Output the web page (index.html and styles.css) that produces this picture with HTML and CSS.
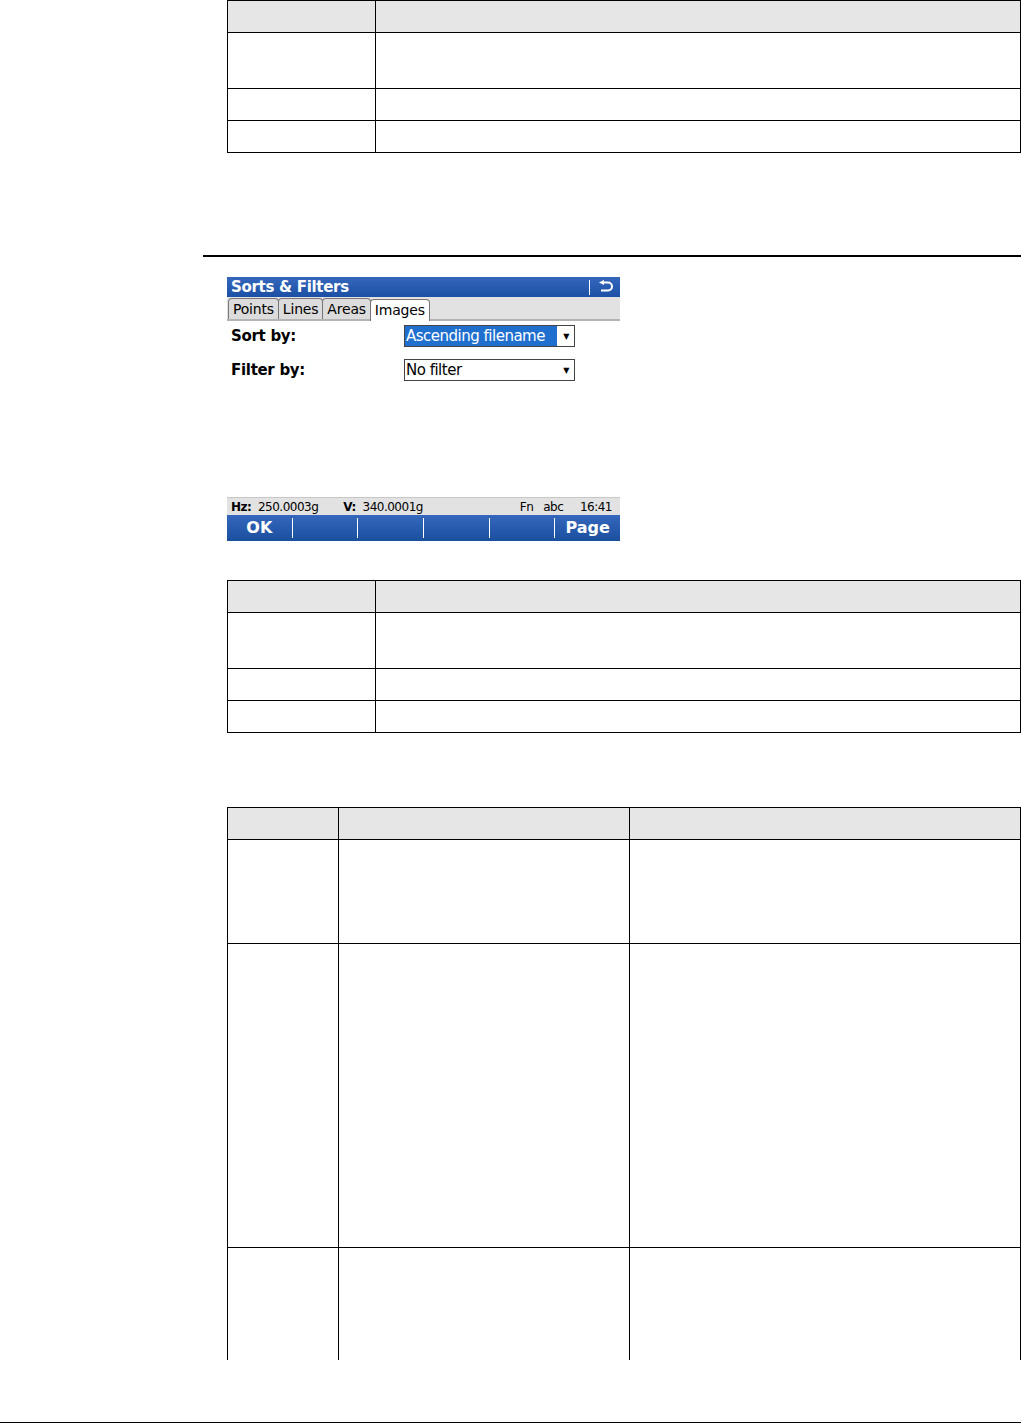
FILE: index.html
```html
<!DOCTYPE html>
<html lang="en">
<head>
    <meta charset="UTF-8">
    <title>Sorts &amp; Filters</title>
    <link rel="stylesheet" href="styles.css">
</head>
<body>
    <div class="page">

        <table class="grid two-col first">
            <tr class="head"><td></td><td></td></tr>
            <tr class="tall"><td></td><td></td></tr>
            <tr><td></td><td></td></tr>
            <tr><td></td><td></td></tr>
        </table>

        <div class="rule"></div>

        <div class="screen">
            <div class="title-bar">
                <span class="title-text">Sorts &amp; Filters</span>
                <span class="title-tools">
                    <span class="sep"></span>
                    <svg class="back-icon" width="16" height="14" viewBox="0 0 16 14">
                        <path d="M5 2.5 H10 A4 4 0 0 1 10 10.5 H3" fill="none" stroke="white" stroke-width="2"/>
                        <path d="M1 2.5 L6 0 L6 5 Z" fill="white"/>
                    </svg>
                </span>
            </div>
            <div class="tabs">
                <span class="tab">Points</span>
                <span class="tab">Lines</span>
                <span class="tab">Areas</span>
                <span class="tab active">Images</span>
            </div>
            <div class="field">
                <span class="label">Sort by:</span>
                <span class="select"><span class="value selected">Ascending filename</span><span class="arrow">&#9660;</span></span>
            </div>
            <div class="field">
                <span class="label">Filter by:</span>
                <span class="select"><span class="value">No filter</span><span class="arrow">&#9660;</span></span>
            </div>
        </div>

        <div class="screen-foot">
            <div class="status">
                <span><b>Hz:</b>&nbsp; 250.0003g</span>
                <span class="v"><b>V:</b>&nbsp; 340.0001g</span>
                <span class="right">Fn&nbsp;&nbsp; abc&nbsp;&nbsp;&nbsp;&nbsp; 16:41</span>
            </div>
            <div class="softkeys">
                <span class="key">OK</span>
                <span class="key"></span>
                <span class="key"></span>
                <span class="key"></span>
                <span class="key"></span>
                <span class="key">Page</span>
            </div>
        </div>

        <table class="grid two-col second">
            <tr class="head"><td></td><td></td></tr>
            <tr class="tall"><td></td><td></td></tr>
            <tr><td></td><td></td></tr>
            <tr><td></td><td></td></tr>
        </table>

        <table class="grid three-col">
            <tr class="head"><td></td><td></td><td></td></tr>
            <tr class="r1"><td></td><td></td><td></td></tr>
            <tr class="r2"><td></td><td></td><td></td></tr>
            <tr class="r3"><td></td><td></td><td></td></tr>
        </table>
    </div>

    <div class="footer-line"></div>
</body>
</html>
```

FILE: styles.css
```css
body {
    margin: 0;
    background: white;
    font-family: "DejaVu Sans", Verdana, sans-serif;
}

.page {
    height: 1422px;
    padding-left: 227px;
    box-sizing: border-box;
    overflow: hidden;
}

/* tables */
.grid {
    border-collapse: collapse;
    width: 794px;
    table-layout: fixed;
}

.grid td {
    border: 1.5px solid black;
    height: 31px;
    padding: 0;
}

.grid .head td {
    background: #e6e6e6;
}

.grid .tall td {
    height: 55px;
}

.two-col td:first-child {
    width: 147px;
}

.second {
    margin-top: 39px;
}

.three-col {
    margin-top: 74px;
}

.three-col td:nth-child(1) { width: 110px; }
.three-col td:nth-child(2) { width: 290px; }
.three-col .r1 td { height: 103px; }
.three-col .r2 td { height: 303px; }
.three-col .r3 td {
    height: 112px;
    border-bottom: none;
}

.rule {
    height: 2px;
    background: black;
    margin: 102px 0 0 -24px;
    width: 818px;
}

/* device screen */
.screen {
    width: 393px;
    margin-top: 20px;
    height: 108px;
}

.title-bar {
    height: 20px;
    background: linear-gradient(to bottom, #3568bd, #1c50a4);
    color: white;
    display: flex;
    align-items: center;
    justify-content: space-between;
    padding: 0 6px 0 4px;
}

.title-text {
    font-weight: bold;
    font-size: 15px;
    letter-spacing: -0.3px;
}

.title-tools {
    display: flex;
    align-items: center;
    gap: 8px;
}

.sep {
    width: 1px;
    height: 15px;
    background: white;
}

.tabs {
    height: 22px;
    background: #e2e2e2;
    border-bottom: 2px solid #b4b4b4;
    display: flex;
    align-items: flex-end;
    padding-left: 1px;
}

.tab {
    font-size: 14px;
    letter-spacing: -0.2px;
    height: 20px;
    line-height: 21px;
    padding: 0 4px;
    border: 1px solid #777;
    border-bottom: none;
    border-radius: 4px 4px 0 0;
    background: #dcdcdc;
    margin-right: -1px;
}

.tab.active {
    background: white;
    height: 21px;
    margin-bottom: -2px;
    position: relative;
}

.field {
    display: flex;
    align-items: center;
    height: 22px;
    margin-top: 4px;
    padding-left: 4px;
}

.field + .field {
    margin-top: 12px;
}

.label {
    width: 173px;
    font-weight: bold;
    font-size: 15px;
    letter-spacing: -0.3px;
}

.select {
    width: 169px;
    height: 20px;
    border: 1px solid #444;
    display: flex;
    align-items: center;
    justify-content: space-between;
    font-size: 15px;
    letter-spacing: -0.5px;
}

.value {
    padding: 0 1px;
    line-height: 20px;
}

.value.selected {
    background: #1f6fcf;
    color: white;
    width: 150px;
}

.arrow {
    font-size: 8px;
    padding-right: 5px;
}

/* status and softkeys */
.screen-foot {
    width: 393px;
    margin-top: 112px;
}

.status {
    height: 17px;
    background: #e2e2e2;
    border-top: 1px solid #c8c8c8;
    display: flex;
    align-items: center;
    font-size: 12px;
    letter-spacing: -0.5px;
    padding: 0 8px 0 4px;
}

.status .v {
    margin-left: 25px;
}

.status .right {
    margin-left: auto;
}

.softkeys {
    height: 26px;
    background: linear-gradient(to bottom, #3568bd, #1a4e9e);
    display: flex;
    align-items: center;
}

.key {
    flex: 1;
    height: 20px;
    line-height: 20px;
    text-align: center;
    color: white;
    font-weight: bold;
    font-size: 16px;
    border-left: 1.5px solid white;
}

.key:first-child {
    border-left: none;
}

.footer-line {
    height: 1px;
    background: black;
}
```
